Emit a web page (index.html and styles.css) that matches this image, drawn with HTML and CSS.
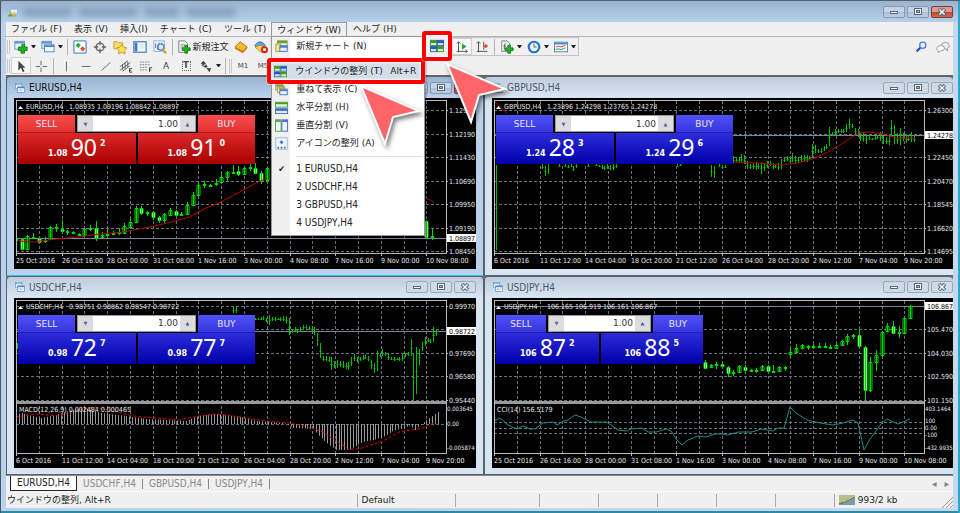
FILE: index.html
```
<!DOCTYPE html>
<html lang="ja">
<head>
    <meta charset="UTF-8">
    <meta name="viewport" content="width=device-width, initial-scale=1.0">
    <title>EURUSD,H4</title>
    <link rel="stylesheet" href="styles.css">
</head>
<body>
    <!-- Icon set -->
    <svg class="sprite" aria-hidden="true">
        <symbol id="i-app" viewBox="0 0 16 16"><rect x="4" y="1" width="11" height="10" rx="1" fill="#e8f4fc" stroke="#6aa5d8"/><path d="M5 3h9" stroke="#6aa5d8" stroke-width="2"/><circle cx="4" cy="9" r="2" fill="#e7a33c"/><path d="M0 15q0-4 4-4t4 4z" fill="#4fae3e"/><circle cx="10" cy="10" r="2" fill="#f0b860"/><path d="M7 15q0-3 3-3t4 3z" fill="#e0a030"/></symbol>
        <symbol id="i-new" viewBox="0 0 16 16"><rect x="1" y="1.500" width="11" height="9" fill="#eaf3fb" stroke="#5f93c6"/><path d="M1 3h11" stroke="#5f93c6" stroke-width="2"/><path d="M9 5h3v3h3v4h-3v3H8v-3H5V8h4z" fill="#22b322" stroke="#0d7a12"/></symbol>
        <symbol id="i-profiles" viewBox="0 0 16 16"><rect x="1" y="1.500" width="11" height="8" fill="#dcebf9" stroke="#5b93cf"/><path d="M1 3h11" stroke="#5b93cf" stroke-width="2"/><rect x="4" y="5.500" width="11" height="8" fill="#f4f9fe" stroke="#4b83c4"/><path d="M4 7h11" stroke="#4b83c4" stroke-width="2"/></symbol>
        <symbol id="i-market" viewBox="0 0 16 16"><rect x="1" y="1" width="14" height="14" rx="1" fill="#fff" stroke="#5b93cf" stroke-width="1.500"/><path d="M3 6l3-3 3 3-3 3z" fill="#2ca82c"/><path d="M8 10l3-3 3 3-3 3z" fill="#e4502c"/></symbol>
        <symbol id="i-cross" viewBox="0 0 16 16"><circle cx="8" cy="8" r="4.500" fill="none" stroke="#666" stroke-width="1.500"/><path d="M8 1v5M8 10v5M1 8h5M10 8h5" stroke="#666" stroke-width="1.500"/></symbol>
        <symbol id="i-navigator" viewBox="0 0 16 16"><path d="M1 2h4l1 1h5v7H1z" fill="#f9dd6b" stroke="#c79a24"/><path d="M10 5l2 3 4 1-3 3 1 4-4-2-4 2 1-4-3-3 4-1z" fill="#ffe25c" stroke="#c48e18"/></symbol>
        <symbol id="i-terminal" viewBox="0 0 16 16"><rect x="1" y="2" width="14" height="12" fill="#f6fafe" stroke="#4a86c8" stroke-width="1.500"/><rect x="2" y="3" width="3" height="10" fill="#3d78bf"/><path d="M7 5h6M7 7h6M7 9h6" stroke="#d0e0f0"/></symbol>
        <symbol id="i-tester" viewBox="0 0 16 16"><rect x="1" y="1" width="12" height="12" fill="#edf4fb" stroke="#8ab0d8"/><path d="M3 9V4M5 11V6M7 5V3M10 8V3" stroke="#4d6d90"/><circle cx="9" cy="8" r="3.500" fill="#d8ecfb" stroke="#4d85b8" stroke-width="1.500"/><path d="M11 11l4 4" stroke="#d8a22c" stroke-width="2.500"/></symbol>
        <symbol id="i-order" viewBox="0 0 16 16"><path d="M2 1h7l3 3v10H2z" fill="#f4f4f4" stroke="#777"/><path d="M4 5h5M4 7h5M4 9h4" stroke="#999"/><path d="M9 6h3v3h3v3h-3v3H9v-3H6V9h3z" fill="#22b322" stroke="#0d7a12"/></symbol>
        <symbol id="i-gold" viewBox="0 0 16 16"><path d="M1 8l6-6 8 6-5 6z" fill="#f0b92e" stroke="#a8741a"/><path d="M1 8l9 4 5-4v2l-5 5-9-5z" fill="#c9861c"/></symbol>
        <symbol id="i-expert" viewBox="0 0 16 16"><path d="M1 6q6-8 12 0l-3 4H4z" fill="#5fa4dc" stroke="#2d6ea8"/><path d="M1 8l7 6 6-5-7-3z" fill="#f4cf5a" stroke="#ba8a20"/><circle cx="12" cy="11" r="4" fill="#d8260c"/><rect x="10.500" y="9.500" width="3" height="3" fill="#fff"/></symbol>
        <symbol id="i-tile" viewBox="0 0 16 16"><g stroke-width="1"><rect x="0.500" y="1.500" width="7" height="6" fill="#d9f0cc" stroke="#3d8f2c"/><rect x="8.500" y="1.500" width="7" height="6" fill="#cfe0fa" stroke="#2f5fc0"/><rect x="0.500" y="8.500" width="7" height="6" fill="#cfe0fa" stroke="#2f5fc0"/><rect x="8.500" y="8.500" width="7" height="6" fill="#d9f0cc" stroke="#3d8f2c"/></g><path d="M0 3h8M8 10h8" stroke="#3d9b2a" stroke-width="3"/><path d="M8 3h8M0 10h8" stroke="#2c58c4" stroke-width="3"/></symbol>
        <symbol id="i-cascade" viewBox="0 0 16 16"><rect x="1" y="1.500" width="9" height="7" fill="#e4f4da" stroke="#5a9a3a"/><path d="M1 3h9" stroke="#5a9a3a" stroke-width="2"/><rect x="3" y="4.500" width="9" height="7" fill="#fbeec0" stroke="#c08d20"/><path d="M3 6h9" stroke="#d8a22c" stroke-width="2"/><rect x="6" y="7.500" width="9" height="7" fill="#eaf2fd" stroke="#2c62b8"/><path d="M6 9h9" stroke="#3f78d0" stroke-width="2"/></symbol>
        <symbol id="i-horizontal" viewBox="0 0 16 16"><rect x="0.500" y="1.500" width="15" height="6" fill="#e8f5e2" stroke="#3d8f2c"/><path d="M1 3h14" stroke="#3d9b2a" stroke-width="2"/><rect x="0.500" y="9.500" width="15" height="6" fill="#e2ecfb" stroke="#2f5fc0"/><path d="M1 11h14" stroke="#2c58c4" stroke-width="2"/></symbol>
        <symbol id="i-vertical" viewBox="0 0 16 16"><rect x="0.500" y="1" width="7" height="14" fill="#f1faee" stroke="#3d8f2c"/><path d="M1 2.500h6" stroke="#3d9b2a" stroke-width="2"/><rect x="8.500" y="1" width="7" height="14" fill="#eef4fd" stroke="#2f5fc0"/><path d="M9 2.500h6" stroke="#2c58c4" stroke-width="2"/></symbol>
        <symbol id="i-icons" viewBox="0 0 16 16"><rect x="1" y="1" width="14" height="14" fill="#eef5fc" stroke="#8cb0d8"/><path d="M8 4l2.500 2.500L8 9 5.500 6.500z" fill="#3d7cc9"/><path d="M3 13h2M7 13h2M11 13h2" stroke="#3d6fa8" stroke-width="2"/></symbol>
        <symbol id="i-newchart" viewBox="0 0 16 16"><rect x="3" y="1" width="12" height="9" fill="#fdf4cf" stroke="#8d9a2c"/><path d="M3 2.500h12" stroke="#5fa038" stroke-width="3"/><rect x="1" y="5" width="6" height="9" fill="#f7e394" stroke="#b9912a"/><rect x="6" y="7" width="9" height="7" fill="#e7f0fc" stroke="#2c62b8"/><path d="M6 8.500h9" stroke="#3f78d0" stroke-width="2"/></symbol>
        <symbol id="i-scroll" viewBox="0 0 16 16"><path d="M4 2v12M2 4l2-2 2 2M2 13h12M12 11l2 2-2 2" fill="none" stroke="#444"/><path d="M8 4v7l5-3.500z" fill="#22a532"/></symbol>
        <symbol id="i-shift" viewBox="0 0 16 16"><path d="M4 2v12M2 4l2-2 2 2M2 13h12M10 2v9" fill="none" stroke="#444"/><path d="M15 7h-4M13 5l-2 2 2 2" fill="none" stroke="#d2401c" stroke-width="1.500"/></symbol>
        <symbol id="i-indicator" viewBox="0 0 16 16"><path d="M2 1h6l3 3v9H2z" fill="#f4f4f4" stroke="#777"/><path d="M7 4q-2 0-2 3v4M4 7h3" fill="none" stroke="#555"/><path d="M9 6h3v3h3v3h-3v3H9v-3H6V9h3z" fill="#22b322" stroke="#0d7a12"/></symbol>
        <symbol id="i-clock" viewBox="0 0 16 16"><circle cx="8" cy="8" r="6" fill="#f3f9ff" stroke="#2672c8" stroke-width="2.500"/><path d="M8 4v4h3" fill="none" stroke="#345"/></symbol>
        <symbol id="i-template" viewBox="0 0 16 16"><rect x="0.500" y="2.500" width="15" height="11" fill="#f4f9fe" stroke="#4a7fb5"/><path d="M1 4h14" stroke="#4a86c8" stroke-width="2"/><path d="M2 8l3-1 3 1 5-2" fill="none" stroke="#c0392b"/><path d="M2 11l3-1 3 1 5-2" fill="none" stroke="#2e9b3f"/></symbol>
        <symbol id="i-search" viewBox="0 0 16 16"><circle cx="10" cy="6" r="3.500" fill="#eaf3fd" stroke="#4a7fdc" stroke-width="1.500"/><path d="M7 9l-4 4" stroke="#2454c0" stroke-width="2.500"/></symbol>
        <symbol id="i-chat" viewBox="0 0 18 16"><path d="M12 2q5 0 5 4t-3 4l1 3-4-3q-4 0-4-4t5-4z" fill="#eee" stroke="#888"/><path d="M6 6q5 0 5 3.500T6 13l-3 2v-2q-2-1-2-3.500T6 6z" fill="#f8f8f8" stroke="#888"/></symbol>
        <symbol id="i-pointer" viewBox="0 0 16 16"><path d="M5 2v11l3-3 2 5 2-1-2-4h3z" fill="#444"/></symbol>
        <symbol id="i-hair" viewBox="0 0 16 16"><path d="M8 2v5M8 10v5M2 8.500h5M10 8.500h5" stroke="#555"/></symbol>
        <symbol id="i-vline" viewBox="0 0 16 16"><path d="M8.500 3v11" stroke="#555"/></symbol>
        <symbol id="i-hline" viewBox="0 0 16 16"><path d="M3 8.500h10" stroke="#555"/></symbol>
        <symbol id="i-trend" viewBox="0 0 16 16"><path d="M3 13L13 4" stroke="#555"/></symbol>
        <symbol id="i-channel" viewBox="0 0 16 16"><path d="M1 9l9-7M1 13L13 4M4 14l8-6M4 6v6M7 4v7M10 3v6" stroke="#555"/><path d="M15 11h-3v4h3M12 13h2" fill="none" stroke="#333"/></symbol>
        <symbol id="i-fibo" viewBox="0 0 16 16"><path d="M1 3.500h12M1 6.500h12M1 9.500h9M1 12.500h9" stroke="#777" stroke-dasharray="2 1"/><path d="M15 10h-3v5M12 12.500h2" fill="none" stroke="#333"/></symbol>
        <symbol id="i-objects" viewBox="0 0 16 16"><path d="M2 5l3-3 3 3-3 2zM5 9l3-3 2 3zM9 11l5-1-2 5z" fill="#444"/><path d="M3 7l9 5" stroke="#444"/></symbol>
        <symbol id="i-child" viewBox="0 0 16 16"><rect x="1" y="1" width="10" height="8" fill="#fff" stroke="#5b93cf"/><path d="M1 2.500h10" stroke="#5b93cf" stroke-width="2" stroke-dasharray="2 1"/><rect x="4" y="6" width="11" height="9" fill="#fff" stroke="#4b86cc"/><path d="M4 7.500h11" stroke="#4b86cc" stroke-width="2"/><path d="M6 12l2-2 2 3 3-3" fill="none" stroke="#4b86cc"/></symbol>
        <symbol id="i-min" viewBox="0 0 10 8"><rect x="1.500" y="3.500" width="7" height="2" fill="#fff" stroke="#5a6478"/></symbol>
        <symbol id="i-max" viewBox="0 0 10 8"><rect x="1.500" y="0.500" width="7" height="6" fill="#fff" stroke="#5a6478"/><rect x="3.500" y="2.500" width="3" height="2" fill="#aab8cc" stroke="#5a6478"/></symbol>
        <symbol id="i-close" viewBox="0 0 10 8"><path d="M2 1l6 6M8 1L2 7" stroke="#5a6478" stroke-width="3.500"/><path d="M2.500 1.500l5 5M7.500 1.500l-5 5" stroke="#fff" stroke-width="1.500"/></symbol>
        <symbol id="i-arrow" viewBox="0 0 66 68"><path d="M3 3l58 25-26 6-8 27z" fill="#ff6468" stroke="#fff" stroke-width="2"/></symbol>
    </svg>

    <div class="app">
        <header class="titlebar">
            <svg class="icon-small"><use href="#i-app"/></svg>
            <div class="blurred"><i></i><i></i><i></i><i></i></div>
            <div class="win-buttons">
                <button aria-label="最小化"><svg><use href="#i-min"/></svg></button>
                <button aria-label="最大化"><svg><use href="#i-max"/></svg></button>
                <button class="close" aria-label="閉じる"><svg><use href="#i-close"/></svg></button>
            </div>
        </header>

        <div class="client">
            <!-- Menu bar -->
            <nav class="menubar">
                <button>ファイル (F)</button>
                <button>表示 (V)</button>
                <button>挿入(I)</button>
                <button>チャート (C)</button>
                <button>ツール (T)</button>
                <div class="menu-open">
                    <button>ウィンドウ (W)</button>
                    <div class="dropdown">
                        <button class="item first"><svg><use href="#i-newchart"/></svg><span>新規チャート (N)</span></button>
                        <div class="highlight">
                            <button class="item selected"><svg><use href="#i-tile"/></svg><span>ウインドウの整列 (T)</span><kbd>Alt+R</kbd></button>
                            <svg class="arrow arrow-menu"><use href="#i-arrow"/></svg>
                        </div>
                        <button class="item"><svg><use href="#i-cascade"/></svg><span>重ねて表示 (C)</span></button>
                        <button class="item"><svg><use href="#i-horizontal"/></svg><span>水平分割 (H)</span></button>
                        <button class="item"><svg><use href="#i-vertical"/></svg><span>垂直分割 (V)</span></button>
                        <button class="item"><svg><use href="#i-icons"/></svg><span>アイコンの整列 (A)</span></button>
                        <hr>
                        <button class="item latin"><b>✔</b><span>1 EURUSD,H4</span></button>
                        <button class="item latin"><b></b><span>2 USDCHF,H4</span></button>
                        <button class="item latin"><b></b><span>3 GBPUSD,H4</span></button>
                        <button class="item latin"><b></b><span>4 USDJPY,H4</span></button>
                    </div>
                </div>
                <button>ヘルプ (H)</button>
            </nav>

            <!-- Toolbars -->
            <div class="toolbar">
                <div class="tools left">
                    <span class="grip"></span>
                    <button class="tool"><svg><use href="#i-new"/></svg></button><span class="caret"></span>
                    <button class="tool"><svg><use href="#i-profiles"/></svg></button><span class="caret"></span>
                    <span class="sep"></span>
                    <button class="tool"><svg><use href="#i-market"/></svg></button>
                    <button class="tool"><svg><use href="#i-cross"/></svg></button>
                    <button class="tool"><svg><use href="#i-navigator"/></svg></button>
                    <button class="tool"><svg><use href="#i-terminal"/></svg></button>
                    <button class="tool"><svg><use href="#i-tester"/></svg></button>
                    <span class="sep"></span>
                    <button class="tool wide"><svg><use href="#i-order"/></svg>新規注文</button>
                    <button class="tool"><svg><use href="#i-gold"/></svg></button>
                    <button class="tool"><svg><use href="#i-expert"/></svg></button>
                </div>
                <div class="tools right">
                    <div class="spot">
                        <button class="tool"><svg><use href="#i-tile"/></svg></button>
                        <svg class="arrow arrow-tool"><use href="#i-arrow"/></svg>
                    </div>
                    <button class="tool pressed"><svg><use href="#i-scroll"/></svg></button>
                    <button class="tool"><svg><use href="#i-shift"/></svg></button>
                    <span class="sep"></span>
                    <button class="tool"><svg><use href="#i-indicator"/></svg></button><span class="caret"></span>
                    <button class="tool"><svg><use href="#i-clock"/></svg></button><span class="caret"></span>
                    <button class="tool"><svg><use href="#i-template"/></svg></button><span class="caret"></span>
                </div>
                <div class="tools extra">
                    <button class="tool"><svg><use href="#i-search"/></svg></button>
                    <button class="tool"><svg><use href="#i-chat"/></svg></button>
                </div>
            </div>
            <div class="toolbar second">
                <div class="tools">
                    <span class="grip"></span>
                    <button class="tool pressed"><svg><use href="#i-pointer"/></svg></button>
                    <button class="tool"><svg><use href="#i-hair"/></svg></button>
                    <span class="sep"></span>
                    <button class="tool"><svg><use href="#i-vline"/></svg></button>
                    <button class="tool"><svg><use href="#i-hline"/></svg></button>
                    <button class="tool"><svg><use href="#i-trend"/></svg></button>
                    <button class="tool"><svg><use href="#i-channel"/></svg></button>
                    <button class="tool"><svg><use href="#i-fibo"/></svg></button>
                    <button class="tool">A</button>
                    <button class="tool"><span class="text-label">T</span></button>
                    <button class="tool"><svg><use href="#i-objects"/></svg></button><span class="caret"></span>
                    <span class="sep"></span>
                    <span class="grip"></span>
                    <button class="tool period">M1</button>
                    <button class="tool period">M5</button>
                </div>
            </div>

            <!-- Chart windows, filled by script.js -->
            <main class="mdi" id="charts"></main>

            <div class="tabs">
                <a class="active" href="#EURUSD">EURUSD,H4</a>
                <a href="#USDCHF">USDCHF,H4</a>
                <a href="#GBPUSD">GBPUSD,H4</a>
                <a href="#USDJPY">USDJPY,H4</a>
                <div class="tab-scroll">
                    <button aria-label="左へ">◂</button>
                    <button aria-label="右へ">▸</button>
                </div>
            </div>

            <footer class="status">
                <span class="hint">ウインドウの整列, Alt+R</span>
                <span class="profile">Default</span>
                <span class="message"></span>
                <span></span>
                <span></span>
                <span></span>
                <span></span>
                <span></span>
                <span class="traffic">
                    <svg viewBox="0 0 17 10"><path d="M1 0v9M3 0v9M5 0v8M7 0v7M9 0v6M11 0v5M13 0v4M15 0v3" stroke="#7c8a1c"/><path d="M1 8v2M3 7v3M5 7v3M7 6v4M9 5v5M11 4v6M13 3v7M15 2v8" stroke="#12405f"/></svg>
                    993/2 kb
                </span>
                <svg class="resize" viewBox="0 0 12 12"><path d="M1 12L12 1M5 12l7-7M9 12l3-3" stroke="#999"/></svg>
            </footer>
        </div>
    </div>
    <script src="script.js"></script>
</body>
</html>
```
FILE: styles.css
```
* {
    box-sizing: border-box;
}

body {
    margin: 0;
    font-family: "DejaVu Sans", "Noto Sans CJK JP", sans-serif;
    font-size: 9px;
    color: #222;
    background-color: #b9d1ea;
}

button {
    margin: 0;
    padding: 0;
    border: none;
    background: none;
    font: inherit;
    color: inherit;
    white-space: nowrap;
}

.sprite {
    display: none;
}

.app {
    display: flex;
    flex-direction: column;
    min-height: 100vh;
    padding: 0 7px 5px 6px;
    background: linear-gradient(90deg, #b9d1ea, #c4d9ee);
    border-top: 1px solid #5a5e66;
    box-shadow: inset 1px 0 #4a5562, inset -2px 0 #2ea6c8, inset 0 -2px #2b8ba4;
}

/* Title bar */
.titlebar {
    display: flex;
    align-items: center;
    height: 21px;
    margin: 0 -5px 0 -5px;
    padding: 0 5px 0 7px;
    background: linear-gradient(#98b3cf, #b7d0ea);
}

.icon-small {
    flex: none;
    width: 10px;
    height: 10px;
}

.blurred {
    display: flex;
    flex: 1;
    gap: 8px;
    padding-left: 5px;
    filter: blur(3px);
}

.blurred i {
    width: 48px;
    height: 8px;
    background: #839eba;
}

.blurred i:nth-child(2) {
    width: 58px;
}

.blurred i:nth-child(3) {
    width: 34px;
}

.win-buttons {
    display: flex;
    gap: 2px;
    margin-left: auto;
}

.win-buttons button {
    display: flex;
    align-items: center;
    justify-content: center;
    width: 22px;
    height: 12px;
    border: 1px solid #8495ad;
    border-radius: 2px;
    background: linear-gradient(#c3d4e6 45%, #a8bfd8 50%, #bdd2e8);
}

.win-buttons svg {
    width: 10px;
    height: 8px;
}

.titlebar .close,
.active .close {
    border-color: #7c3c3c;
    background: linear-gradient(#d99a8d 45%, #bb4630 50%, #cf6a50);
}

.client {
    display: flex;
    flex: 1;
    flex-direction: column;
    background: #f0f0f0;
}

/* Menu bar */
.menubar {
    display: flex;
    height: 15px;
    margin-left: -1px;
    border-bottom: 1px solid #b4b4b4;
}

.menubar > button,
.menu-open > button {
    padding: 0 6px;
    line-height: 13px;
}

.menu-open {
    position: relative;
    margin-left: -1px;
}

.menu-open > button {
    height: 15px;
    border: 1px solid #999;
    border-bottom: none;
    padding: 0 5px;
    background: #f0f0f0;
}

.dropdown {
    position: absolute;
    top: 14px;
    left: 0;
    z-index: 5;
    width: 154px;
    padding-bottom: 3px;
    border: 1px solid #979797;
    background: linear-gradient(90deg, #f0f0f0 18px, #fff 18px);
    box-shadow: 1px 1px 2px rgba(0, 0, 0, 0.4);
}

.item {
    display: flex;
    align-items: center;
    width: 100%;
    height: 18px;
    padding-left: 3px;
    line-height: 12px;
}

.item.first {
    margin-bottom: 3px;
}

.item svg,
.item b {
    flex: none;
    width: 13px;
    height: 13px;
    margin-right: 8px;
}

.item b {
    text-align: center;
    font-size: 9px;
}

.item kbd {
    margin-left: auto;
    padding-right: 5px;
    font: inherit;
}

.latin,
.child-title,
.tabs {
    font-family: "DejaVu Sans Condensed", "DejaVu Sans", sans-serif;
    font-size: 10px;
}

.dropdown hr {
    margin: 4px 2px 3px 24px;
    border: none;
    border-top: 1px solid #e0e0e0;
}

/* Red frames and arrows */
.highlight,
.spot {
    position: relative;
    border: 4px solid #f00;
    border-radius: 3px;
    box-shadow: 0 0 2px #fff;
}

.highlight {
    z-index: 2;
    margin: 0 -1px -4px -5px;
    background: #fff;
}

.highlight .selected {
    background: #d3deea;
    box-shadow: inset 0 0 2px 1px #fff;
}

.highlight .arrow,
.spot .arrow {
    position: absolute;
    width: 66px;
    height: 68px;
    margin: 0;
    filter: drop-shadow(2px 3px 2px rgba(0, 0, 0, 0.5));
    pointer-events: none;
}

.highlight .arrow {
    top: 21px;
    left: 87px;
}

.spot .arrow {
    top: 26px;
    left: 18px;
}

/* Toolbars */
.toolbar {
    display: flex;
    align-items: center;
    height: 19px;
}

.toolbar.second {
    height: 20px;
    border-bottom: 1px solid #666;
}

.tools {
    display: flex;
    align-items: center;
}

.tools.left {
    width: 416px;
}

.tools.right {
    height: 19px;
    border: 1px solid #c4c4c4;
    border-left: none;
}

.tools.extra {
    gap: 2px;
    margin-left: auto;
}

.tool {
    display: flex;
    align-items: center;
    justify-content: center;
    width: 20px;
    height: 17px;
    color: #444;
}

.tool svg {
    width: 14px;
    height: 14px;
}

.tool.wide {
    gap: 1px;
    width: 56px;
    color: #222;
}

.tool.pressed {
    border: 1px solid #d0d0d0;
    background: #f8f8f8;
}

.tool.period {
    font-size: 7px;
}

.text-label {
    width: 9px;
    border: 1px dotted #666;
    font-size: 8px;
    font-weight: bold;
    line-height: 8px;
}

.caret {
    width: 5px;
    margin-right: 2px;
    border: 2px solid transparent;
    border-top: 3px solid #222;
    border-bottom: none;
}

.sep {
    width: 1px;
    height: 16px;
    margin: 0 2px;
    background: #b4b4b4;
}

.grip {
    width: 3px;
    height: 14px;
    margin: 0 1px;
    border: 1px solid #c8c8c8;
    border-width: 0 1px;
}

.spot {
    z-index: 6;
    margin: -2px 0 0;
    padding: 1px;
    background: #fff;
}

.spot .tool {
    height: 20px;
    background: #f0f0f0;
}

/* Chart windows */
.mdi {
    display: grid;
    flex: 1;
    grid-template-columns: 478fr 469fr;
    background: #6d7278;
}

.child {
    display: flex;
    flex-direction: column;
    min-width: 0;
    padding: 0 7px 6px;
    border: 1px solid #5c6169;
    border-radius: 4px 4px 0 0;
    background: linear-gradient(#bfcddc, #d7e4f2 20px);
    overflow: hidden;
}

.child.active {
    background: linear-gradient(#99b4d1, #b9d1ea 20px);
    border-bottom-color: #2bc4e4;
}

.child.cut {
    padding-right: 0;
    border-right: none;
}

.child-title {
    display: flex;
    align-items: center;
    gap: 4px;
    height: 21px;
    padding-left: 1px;
    color: #4d5a69;
}

.active .child-title {
    color: #111;
}

.child:not(.active) .win-buttons button {
    border-color: #9aa9bc;
    background: #cfdae7;
}

.chart {
    position: relative;
    flex: 1;
    padding: 2px 0 0 2px;
    background: #000;
}

.plot {
    display: block;
    width: 100%;
    min-height: 168px;
    aspect-ratio: 460 / 168;
}

.plot text {
    fill: #e8e8e8;
    font-family: "DejaVu Sans Condensed", "DejaVu Sans", sans-serif;
    font-size: 7px;
}

.plot .tag {
    fill: #000;
}

.plot .small {
    font-size: 6px;
}

.grid {
    stroke: #66727f;
    stroke-dasharray: 3 2;
}

.frame {
    fill: none;
    stroke: #bbb;
}

.price {
    stroke: #778899;
}

.candle {
    stroke: #00d800;
    fill: #000;
}

.candle.down {
    fill: #fff;
}

.bars {
    fill: none;
    stroke: #00c000;
}

.average {
    fill: none;
    stroke: #b80000;
}

.histogram {
    stroke: #999;
}

.signal {
    fill: none;
    stroke: #e00000;
    stroke-dasharray: 3 2;
}

.cci {
    fill: none;
    stroke: #208a82;
}

/* One click trading */
.trade {
    position: absolute;
    top: 17px;
    left: 4px;
    display: grid;
    grid-template-columns: 57px minmax(0, 1fr) 57px;
    width: 237px;
    color: #e8e8fa;
    background: #000;
}

.trade.narrow {
    grid-template-columns: 50px minmax(0, 1fr) 50px;
    width: 207px;
}

.trade .side {
    height: 18px;
    background: linear-gradient(#5050fa, #3434dc);
    box-shadow: inset 0 -1px #2020b0;
}

.trade .quotes {
    display: grid;
    grid-column: 1 / 4;
    grid-template-columns: 1fr 1fr;
    gap: 2px;
}

.quote {
    display: flex;
    align-items: baseline;
    justify-content: center;
    gap: 3px;
    height: 31px;
    font-size: 8px;
    font-weight: bold;
    line-height: 28px;
    color: #fff;
    background: linear-gradient(#2c2cdc, #0000a8);
}

.quote strong {
    font-family: "Noto Sans", sans-serif;
    font-size: 23px;
    font-weight: normal;
}

.quote sup {
    align-self: flex-start;
    font-size: 8px;
    line-height: 21px;
}

.red .side {
    background: linear-gradient(#fa4c4c, #e03030);
    box-shadow: inset 0 -1px #b81c1c;
}

.red .quote {
    background: linear-gradient(#dc2828, #a80000);
}

.volume {
    display: flex;
    height: 17px;
    margin: 0 2px;
    border: 1px solid #999;
    background: #fff;
}

.volume button {
    flex: none;
    width: 15px;
    background: #dcdcdc;
    color: #4a62a8;
    font-size: 5px;
}

.volume input {
    flex: 1;
    width: 0;
    min-width: 0;
    padding: 0 2px;
    border: none;
    font: inherit;
    color: #333;
    text-align: right;
}

/* Tabs and status bar */
.tabs {
    display: flex;
    align-items: center;
    height: 16px;
    padding-left: 4px;
    color: #888;
    border-top: 1px solid #888;
}

.tabs a {
    padding: 0 6px;
    border-right: 1px solid #888;
    line-height: 10px;
    color: inherit;
    text-decoration: none;
}

.tabs .active {
    border: 1px solid #222;
    border-top: none;
    background: #fff;
    line-height: 14px;
    color: #222;
}

.tab-scroll {
    display: flex;
    gap: 8px;
    margin-left: auto;
    padding-right: 4px;
}

.status {
    display: flex;
    align-items: center;
    height: 17px;
    border-top: 1px solid #fafafa;
}

.status span {
    flex: 59;
    height: 13px;
    border-left: 1px solid #aaa;
    line-height: 13px;
}

.status .hint {
    flex: 356;
    padding-left: 1px;
    border: none;
}

.status .profile {
    flex: 95;
    padding-left: 4px;
}

.status .message {
    flex: 85;
}

.status .traffic {
    display: flex;
    flex: 104;
    gap: 2px;
    align-items: center;
    padding-left: 4px;
}

.traffic svg {
    width: 17px;
    height: 10px;
}

.resize {
    align-self: flex-end;
    width: 12px;
    height: 12px;
}
```
FILE: script.js
```
// Chart windows. Coordinates are in plot units: 430 x 154, axis to the right.
// candle: [high, top, bottom, low, down]
const charts = [
    {
        symbol: 'EURUSD', values: '1.08935 1.09196 1.08842 1.08897', active: true, color: 'red',
        sell: ['1.08', '90', '2'], buy: ['1.08', '91', '0'],
        rows: [10, 34, 57, 81, 104, 128, 151],
        labels: ['1.12930', '1.12190', '1.11430', '1.10690', '1.09950', '1.09190', '1.08450'],
        price: 138, tag: '1.08897',
        times: ['25 Oct 2016', '26 Oct 16:00', '28 Oct 00:00', '31 Oct 08:00', '1 Nov 16:00', '3 Nov 00:00', '4 Nov 08:00', '7 Nov 16:00', '9 Nov 00:00', '10 Nov 08:00'],
        candles: { start: 0, data: [
            [137, 139, 140, 144], [138, 139, 149, 150, 1], [135, 136, 149, 150], [133, 137, 138, 139, 1], [137, 138, 142, 143, 1],
            [137, 140, 141, 143], [126, 127, 139, 140], [124, 127, 128, 132, 1], [120, 129, 131, 132, 1], [130, 131, 132, 135],
            [131, 132, 133, 134, 1], [133, 134, 135, 136, 1], [128, 129, 135, 136], [125, 128, 129, 131], [121, 128, 138, 141, 1],
            [132, 135, 137, 139], [129, 134, 135, 136], [131, 133, 134, 135], [128, 132, 133, 135], [123, 126, 133, 134],
            [119, 122, 127, 129], [106, 108, 122, 123], [106, 108, 113, 115, 1], [111, 112, 113, 116], [111, 112, 117, 120, 1],
            [116, 117, 120, 123, 1], [113, 114, 120, 124], [108, 110, 115, 116], [110, 111, 115, 116, 1], [112, 114, 115, 116],
            [102, 105, 114, 115], [92, 95, 105, 106], [82, 85, 95, 96], [81, 84, 85, 88], [84, 85, 86, 87],
            [79, 83, 84, 86], [73, 77, 82, 83], [71, 72, 77, 81], [65, 72, 73, 74], [66, 71, 74, 76, 1],
            [66, 68, 74, 75], [64, 67, 68, 71], [63, 68, 73, 74, 1], [71, 73, 81, 84, 1], [67, 68, 80, 83]
        ] },
        extra: { start: 72, data: [[120, 121, 137, 138, 1], [128, 136, 137, 140]] },
        average: '3,141 17,142 40,139 63,137 83,134 107,132 123,129 143,125 163,120 173,117 190,108 203,103 220,94 240,83 251,78',
        averageEnd: '400,92 410,98 418,102'
    },
    {
        symbol: 'GBPUSD', values: '1.23896 1.24298 1.23765 1.24278', color: 'blue', cut: true,
        sell: ['1.24', '28', '3'], buy: ['1.24', '29', '6'],
        rows: [10, 34, 57, 81, 104, 128, 151],
        labels: ['1.26300', '', '1.22450', '1.20470', '1.18545', '1.16620', '1.14695'],
        price: 35, tag: '1.24278',
        times: ['6 Oct 2016', '11 Oct 12:00', '14 Oct 04:00', '18 Oct 20:00', '21 Oct 12:00', '26 Oct 04:00', '28 Oct 20:00', '2 Nov 12:00', '7 Nov 04:00', '9 Nov 20:00'],
        bars: [
            [2, [[65, 150]]],
            [48, [[64, 69], [66, 76], [64, 74]]],
            [65, [[64, 67]]], [71, [[64, 67], [65, 68], [64, 67], [66, 71], [64, 68]]],
            [94, [[64, 67]]], [102, [[64, 66], [65, 67], [65, 69], [66, 70], [64, 69], [65, 70], [64, 70], [64, 68]]],
            [183, [[64, 67], [64, 66]]], [217, [[65, 77], [66, 78]]], [225, [[64, 67], [65, 69], [65, 68]]],
            [239, [[56, 63], [58, 62], [57, 62], [54, 63], [55, 64], [61, 69], [64, 69], [63, 69], [62, 70], [63, 69],
                [62, 74], [63, 71], [61, 68], [61, 66], [63, 69], [64, 68], [63, 70], [59, 69], [57, 62], [56, 61],
                [58, 63], [53, 62], [56, 64], [57, 63], [55, 62], [55, 61], [55, 62], [56, 59], [44, 58], [45, 53],
                [49, 53], [48, 53], [46, 51], [44, 49], [27, 46], [32, 36], [29, 34], [29, 33], [29, 33], [29, 33],
                [24, 32], [19, 29], [24, 28], [28, 34], [29, 37], [33, 41], [33, 42], [35, 44], [35, 40], [38, 40],
                [36, 40], [35, 39], [32, 41], [36, 44], [37, 44], [36, 45], [20, 36], [25, 44], [33, 44], [28, 45],
                [33, 41], [34, 43], [36, 41], [32, 42], [35, 42]]]
        ],
        average: '0,1 13,13 M239,62 263,63 288,65 303,63 319,59 336,51 349,43 364,33 376,32 389,34 403,38 421,38'
    },
    {
        symbol: 'USDCHF', values: '0.98751 0.98862 0.98547 0.98722', color: 'blue',
        sell: ['0.98', '72', '7'], buy: ['0.98', '77', '7'],
        rows: [6, 29, 53, 76, 100],
        labels: ['0.99970', '', '0.97690', '0.96580', '0.95440'],
        price: 31, tag: '0.98722',
        times: ['6 Oct 2016', '11 Oct 12:00', '14 Oct 04:00', '18 Oct 20:00', '21 Oct 12:00', '26 Oct 04:00', '28 Oct 20:00', '2 Nov 12:00', '7 Nov 04:00', '9 Nov 20:00'],
        bars: [
            [1, [[43, 49]]], [217, [[6, 13], [7, 13]]],
            [239, [[18, 20], [18, 20], [17, 20], [16, 20], [18, 22], [15, 25], [17, 21], [17, 21], [18, 20], [17, 21],
                [16, 21], [16, 24], [18, 35], [29, 33], [27, 32], [29, 33], [27, 31], [25, 29], [25, 29], [26, 30],
                [27, 31], [27, 35], [33, 46], [43, 58], [56, 61], [56, 61], [57, 62], [57, 70], [61, 68], [60, 68],
                [61, 67], [61, 68], [63, 69], [62, 70], [57, 66], [54, 61], [57, 62], [57, 61], [55, 60], [55, 59],
                [56, 61], [60, 69], [63, 73], [51, 71], [53, 57], [49, 56], [52, 56], [53, 60], [57, 60], [57, 61],
                [58, 60], [57, 61], [54, 61], [53, 57], [52, 56], [39, 56], [54, 100], [47, 94], [49, 65], [42, 51],
                [37, 46], [38, 42], [39, 43], [27, 42], [29, 36]]]
        ],
        indicator: 'MACD(12,26,9) 0.002484 0.000465',
        levels: [124],
        indicatorLabels: [[109, '0.003645'], [124, '0.00'], [148, '-0.005874']],
        macd: [[0, 114], [6, 113], [12, 115], [25, 118], [40, 115], [55, 110], [68, 108], [85, 113], [110, 116], [130, 119], [170, 121], [182, 116], [200, 114], [225, 117], [240, 121], [268, 123], [277, 128], [297, 129], [303, 136], [312, 144], [320, 150], [333, 150], [347, 142], [357, 140], [367, 137], [377, 131], [387, 128], [395, 125], [398, 131], [405, 124], [412, 119], [423, 111]],
        signal: '0,117 20,114 43,116 60,110 80,107 117,116 163,120 183,116 200,114 217,116 250,121 273,123 293,127 307,132 320,141 333,149 343,149 367,141 383,132 407,128 420,122'
    },
    {
        symbol: 'USDJPY', values: '106.165 106.919 106.161 106.867', color: 'blue', cut: true, narrow: true,
        sell: ['106', '87', '2'], buy: ['106', '88', '5'],
        rows: [6, 29, 53, 76, 100],
        labels: ['', '105.470', '104.030', '102.590', '101.150'],
        price: 6, tag: '106.867',
        times: ['25 Oct 2016', '26 Oct 16:00', '28 Oct 00:00', '31 Oct 08:00', '1 Nov 16:00', '3 Nov 00:00', '4 Nov 08:00', '7 Nov 16:00', '9 Nov 00:00', '10 Nov 08:00'],
        candles: { start: 37, data: [
            [60, 62, 68, 69, 1], [64, 65, 67, 68], [62, 64, 65, 69], [63, 64, 66, 67, 1], [66, 67, 73, 77, 1],
            [70, 72, 73, 76], [65, 66, 72, 73], [65, 67, 70, 71, 1], [69, 70, 71, 72], [68, 70, 71, 73],
            [65, 66, 70, 71], [65, 66, 71, 72, 1], [65, 71, 72, 73], [66, 67, 71, 72], [66, 67, 68, 71],
            [47, 52, 54, 57], [44, 48, 52, 53], [44, 45, 48, 49], [45, 46, 47, 50, 1], [44, 46, 47, 48],
            [43, 46, 47, 48], [43, 46, 47, 48], [45, 47, 48, 49], [43, 45, 48, 49], [40, 41, 45, 46],
            [34, 36, 41, 45], [34, 35, 36, 39], [29, 35, 46, 47, 1], [46, 47, 90, 100, 1], [57, 62, 90, 92],
            [50, 55, 62, 71], [31, 32, 55, 57], [23, 26, 31, 32], [21, 26, 33, 34, 1], [26, 32, 33, 38],
            [17, 18, 33, 34], [5, 6, 18, 19]
        ] },
        indicator: 'CCI(14) 156.5179',
        levels: [122, 128, 133],
        indicatorLabels: [[109, '403.1464'], [121, '100'], [128, '0.00'], [135, '-100'], [148, '-432.9935']],
        cci: '0,121 6,118 14,125 23,129 29,126 36,129 41,129 49,123 59,122 63,125 70,121 74,120 81,115 87,117 97,122 112,122 117,125 124,130 132,131 137,129 148,128 154,132 162,132 172,129 177,131 183,140 188,145 194,140 204,136 212,137 221,134 228,134 233,135 245,132 258,132 267,129 279,131 284,128 290,128 296,107 302,113 313,120 326,123 339,125 349,123 359,120 364,123 370,150 376,139 382,131 387,124 393,119 404,124 416,119'
    }
];

function line(x1, y1, x2, y2, cls) {
    return `<line class="${cls}" x1="${x1}" y1="${y1}" x2="${x2}" y2="${y2}"/>`;
}

function text(x, y, value, cls) {
    return `<text class="${cls || ''}" x="${x}" y="${y}">${value}</text>`;
}

function drawCandles(set) {
    return set.data.map(([high, top, bottom, low, down], i) => {
        const x = Math.round((set.start + i) * 5.7) + 0.5;
        return `<path class="candle ${down ? 'down' : ''}" d="M${x} ${high}V${low}M${x - 1.5} ${top + 0.5}h3v${bottom - top}h-3z"/>`;
    }).join('');
}

function drawBars(groups) {
    let d = '';
    groups.forEach(([start, list]) => {
        list.forEach(([high, low], i) => {
            const x = Math.round(start + i * 2.83) + 0.5;
            const mid = Math.round((high + low) / 2) + 0.5;
            d += `M${x} ${high}V${low}M${x - 1} ${mid}h2`;
        });
    });
    return `<path class="bars" d="${d}"/>`;
}

// Histogram height between two key points
function valueAt(points, x) {
    const i = points.findIndex(p => p[0] > x);
    if (i < 1) return points[0][1];
    const [x1, y1] = points[i - 1];
    const [x2, y2] = points[i];
    return y1 + (y2 - y1) * (x - x1) / (x2 - x1);
}

function drawPlot(chart) {
    let svg = '';
    for (let i = 1; i < 19; i++) {
        const x = Math.round(i * 22.8) + 0.5;
        svg += line(x, 1, x, 154, 'grid');
    }
    chart.rows.forEach((y, i) => {
        svg += line(0, y + 0.5, 430, y + 0.5, 'grid');
        svg += line(430, y + 0.5, 432, y + 0.5, 'frame');
        if (chart.labels[i]) svg += text(433, y + 3, chart.labels[i]);
    });
    svg += line(0, chart.price + 0.5, 430, chart.price + 0.5, 'price');

    if (chart.candles) svg += drawCandles(chart.candles);
    if (chart.extra) svg += drawCandles(chart.extra);
    if (chart.bars) svg += drawBars(chart.bars);
    if (chart.average) svg += `<path class="average" d="M${chart.average}"/>`;
    if (chart.averageEnd) svg += `<path class="average" d="M${chart.averageEnd}"/>`;

    if (chart.indicator) {
        svg += '<rect x="0" y="101" width="430" height="3" fill="#999"/>';
        chart.levels.forEach(y => svg += line(0, y + 0.5, 430, y + 0.5, 'grid'));
        chart.indicatorLabels.forEach(([y, label]) => svg += text(431, y + 2, label, 'small'));
        if (chart.macd) {
            for (let x = 0; x < 422; x += 2.83) {
                const px = Math.round(x) + 0.5;
                svg += line(px, 124, px, valueAt(chart.macd, x), 'histogram');
            }
            svg += `<path class="signal" d="M${chart.signal}"/>`;
        }
        if (chart.cci) svg += `<path class="cci" d="M${chart.cci}"/>`;
        svg += text(3, 112, chart.indicator);
    }

    svg += '<rect class="frame" x="0.5" y="0.5" width="430" height="153"/>';
    chart.times.forEach((label, i) => {
        const x = Math.round(i * 45.6);
        svg += line(x + 0.5, 154, x + 0.5, 156, 'frame') + text(x, 163, label);
    });
    svg += `<rect x="431" y="${chart.price - 4}" width="29" height="8" fill="#fff"/>` + text(433, chart.price + 3, chart.tag, 'tag');
    svg += '<path d="M2 9l2.5-3 2.500 3z" fill="#fff"/>';
    svg += text(10, 9, chart.symbol + ',H4') + text(53, 9, chart.values);
    return `<svg class="plot" viewBox="0 0 460 168" preserveAspectRatio="xMinYMin slice">${svg}</svg>`;
}

function quote(parts) {
    return `<button class="quote">${parts[0]} <strong>${parts[1]}</strong><sup>${parts[2]}</sup></button>`;
}

document.getElementById('charts').innerHTML = charts.map(chart => `
    <section class="child ${chart.active ? 'active' : ''} ${chart.cut ? 'cut' : ''}" id="${chart.symbol}">
        <div class="child-title">
            <svg class="icon-small"><use href="#i-child"/></svg>
            <span>${chart.symbol},H4</span>
            <div class="win-buttons">
                <button aria-label="最小化"><svg><use href="#i-min"/></svg></button>
                <button aria-label="最大化"><svg><use href="#i-max"/></svg></button>
                <button class="close" aria-label="閉じる"><svg><use href="#i-close"/></svg></button>
            </div>
        </div>
        <div class="chart">
            ${drawPlot(chart)}
            <div class="trade ${chart.color} ${chart.narrow ? 'narrow' : ''}">
                <button class="side">SELL</button>
                <div class="volume">
                    <button aria-label="減らす">▼</button>
                    <input type="text" value="1.00" aria-label="${chart.symbol} 数量">
                    <button aria-label="増やす">▲</button>
                </div>
                <button class="side">BUY</button>
                <div class="quotes">${quote(chart.sell)}${quote(chart.buy)}</div>
            </div>
        </div>
    </section>
`).join('');
```
